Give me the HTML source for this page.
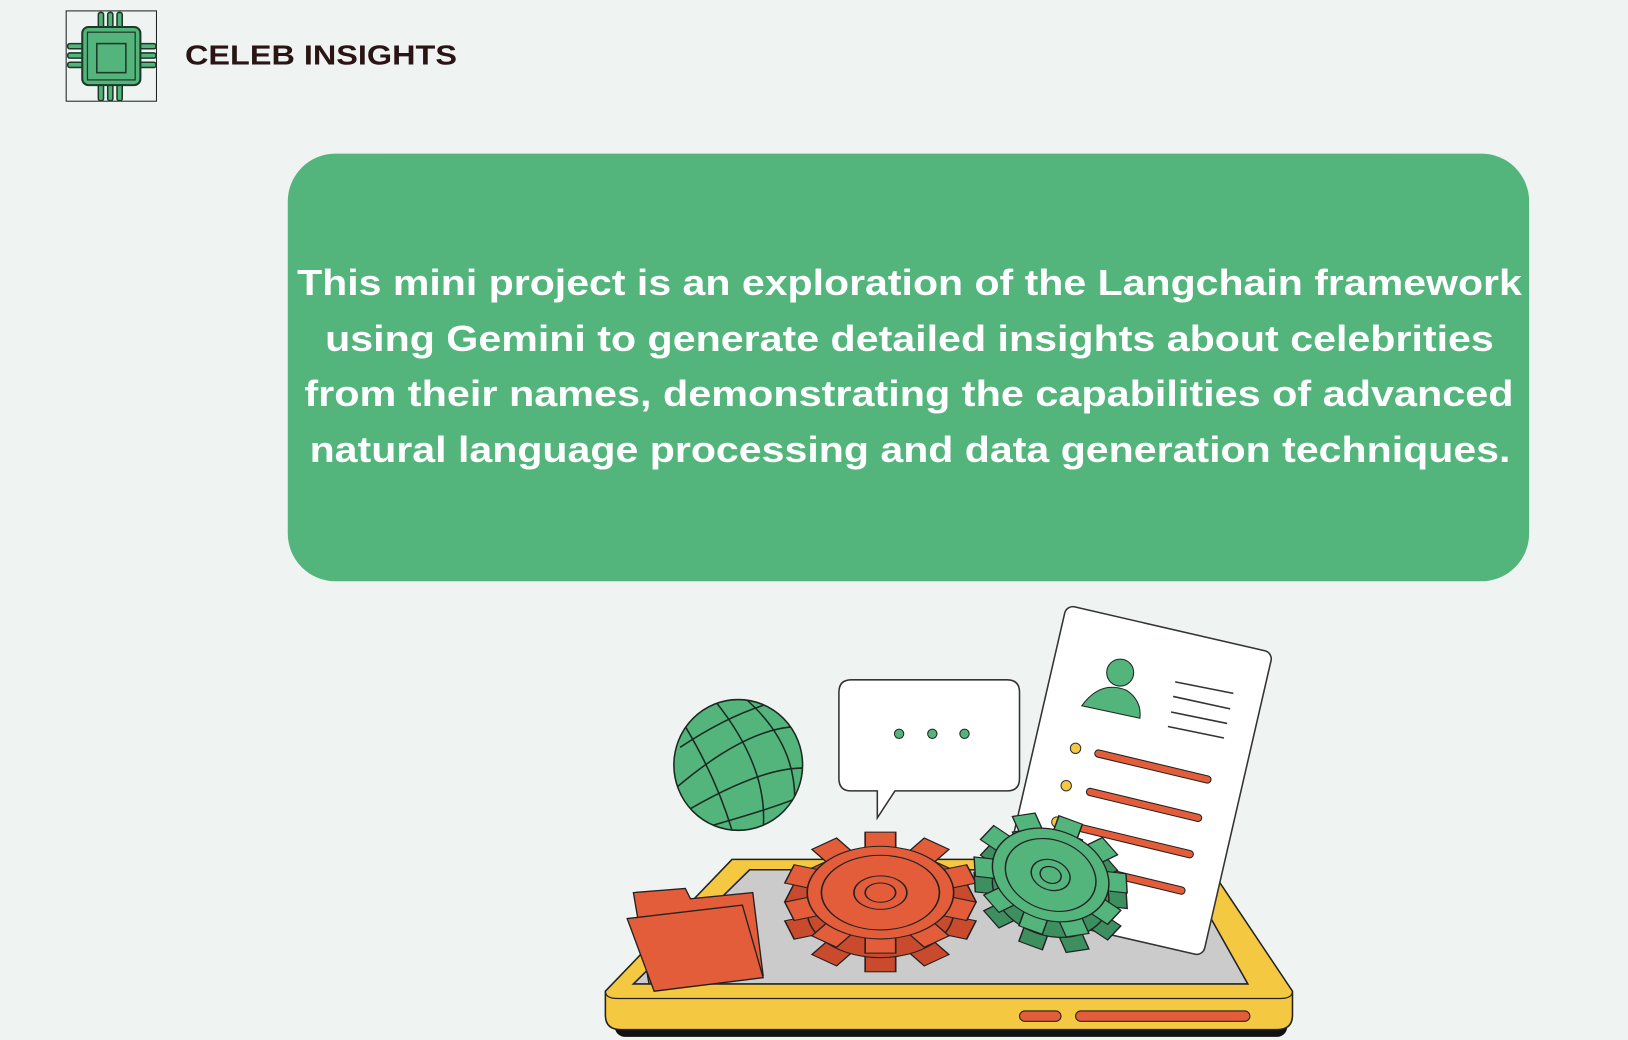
<!DOCTYPE html>
<html><head><meta charset="utf-8"><style>
html,body{margin:0;padding:0;background:#eff3f2;width:1628px;height:1040px;overflow:hidden}
svg{display:block}
text{font-family:"Liberation Sans",sans-serif;font-weight:bold}
</style></head><body>
<svg width="1628" height="1040" viewBox="0 0 1568 1002" xmlns="http://www.w3.org/2000/svg">
<defs>
<clipPath id="gc"><ellipse cx="711" cy="737" rx="62" ry="63"/></clipPath>
<g id="og">
<rect x="-15" y="-94" width="30" height="30"/><rect x="-15" y="-94" width="30" height="30" transform="rotate(36)"/><rect x="-15" y="-94" width="30" height="30" transform="rotate(72)"/><rect x="-15" y="-94" width="30" height="30" transform="rotate(108)"/><rect x="-15" y="-94" width="30" height="30" transform="rotate(144)"/><rect x="-15" y="-94" width="30" height="30" transform="rotate(180)"/><rect x="-15" y="-94" width="30" height="30" transform="rotate(216)"/><rect x="-15" y="-94" width="30" height="30" transform="rotate(252)"/><rect x="-15" y="-94" width="30" height="30" transform="rotate(288)"/><rect x="-15" y="-94" width="30" height="30" transform="rotate(324)"/>
<circle r="72"/>
</g>
</defs>
<rect width="1568" height="1002" fill="#eff3f2"/>
<!-- logo -->
<rect x="63.5" y="10.5" width="87" height="87" fill="#eff3f2" stroke="#222" stroke-width="1"/>
<g fill="#53b47c" stroke="#1d3a28" stroke-width="1.5">
<rect x="94.5" y="12" width="5" height="16" rx="2"/><rect x="103.5" y="12" width="5" height="16" rx="2"/><rect x="112.5" y="12" width="5" height="16" rx="2"/>
<rect x="94.5" y="80" width="5" height="17" rx="2"/><rect x="103.5" y="80" width="5" height="17" rx="2"/><rect x="112.5" y="80" width="5" height="17" rx="2"/>
<rect x="65" y="42" width="17" height="5" rx="2"/><rect x="65" y="51" width="17" height="5" rx="2"/><rect x="65" y="60" width="17" height="5" rx="2"/>
<rect x="132" y="42" width="18" height="5" rx="2"/><rect x="132" y="51" width="18" height="5" rx="2"/><rect x="132" y="60" width="18" height="5" rx="2"/>
<rect x="79" y="26" width="56" height="56" rx="6" stroke-width="2"/>
<rect x="84" y="31" width="46" height="46" fill="none" stroke-width="1.2"/>
<rect x="93" y="42" width="28" height="28" stroke-width="1.5"/>
</g>
<text x="178" y="62" font-size="27" fill="#2a1414" textLength="262" lengthAdjust="spacingAndGlyphs">CELEB INSIGHTS</text>
<!-- green card -->
<rect x="277" y="148" width="1196" height="412" rx="46" fill="#53b47c"/>
<g fill="#fff" font-size="35">
<text x="286" y="284" textLength="1180" lengthAdjust="spacingAndGlyphs">This mini project is an exploration of the Langchain framework</text>
<text x="313" y="338" textLength="1126" lengthAdjust="spacingAndGlyphs">using Gemini to generate detailed insights about celebrities</text>
<text x="293" y="391" textLength="1165" lengthAdjust="spacingAndGlyphs">from their names, demonstrating the capabilities of advanced</text>
<text x="298" y="445" textLength="1157" lengthAdjust="spacingAndGlyphs">natural language processing and data generation techniques.</text>
</g>
<!-- tablet -->
<rect x="592" y="975" width="648" height="24" rx="10" fill="#111"/>
<path d="M583,955 L705,828 L1160,828 L1245,955 L1245,978 Q1245,992 1230,992 L598,992 Q583,992 583,978 Z" fill="#f5c842" stroke="#222" stroke-width="1.5"/>
<path d="M583,955 Q583,962 595,962 L1233,962 Q1245,962 1245,955" fill="none" stroke="#222" stroke-width="1.2"/>
<path d="M610,948 L722,838 L1140,838 L1202,948 Z" fill="#cbcbcb" stroke="#222" stroke-width="1.5"/>
<rect x="982" y="974" width="40" height="10" rx="5" fill="#e45d3a" stroke="#222"/>
<rect x="1036" y="974" width="168" height="10" rx="5" fill="#e45d3a" stroke="#222"/>
<!-- globe -->
<ellipse cx="711" cy="737" rx="62" ry="63" fill="#53b47c" stroke="#1a2a20" stroke-width="1.5"/>
<g stroke="#1a2a20" stroke-width="1.5" fill="none" clip-path="url(#gc)">
<path d="M690,677 Q740,740 735,798"/><path d="M660,700 Q690,750 705,800"/><path d="M720,675 Q770,720 765,780"/>
<path d="M650,760 Q720,700 770,700"/><path d="M655,785 Q730,740 773,740"/><path d="M680,797 Q740,780 765,770"/><path d="M655,720 Q700,690 740,678"/>
</g>
<!-- bubble -->
<path d="M820,655 L970,655 Q982,655 982,667 L982,750 Q982,762 970,762 L862,762 L845,788 L845,762 L820,762 Q808,762 808,750 L808,667 Q808,655 820,655 Z" fill="#fff" stroke="#333" stroke-width="1.5"/>
<g fill="#53b47c" stroke="#222" stroke-width="1"><circle cx="866" cy="707" r="4.5"/><circle cx="898" cy="707" r="4.5"/><circle cx="929" cy="707" r="4.5"/></g>
<!-- document -->
<g transform="translate(1093,752) rotate(13)">
<rect x="-102" y="-150" width="204" height="300" rx="8" fill="#fff" stroke="#333" stroke-width="1.5"/>
</g>
<circle cx="1079" cy="648" r="13" fill="#53b47c" stroke="#222" stroke-width="1"/>
<path d="M1042,680 Q1060,655 1085,665 Q1100,675 1098,692 Z" fill="#53b47c" stroke="#222" stroke-width="1"/>
<g stroke="#333" stroke-width="1.5"><line x1="1132" y1="657" x2="1188" y2="668"/><line x1="1130" y1="671" x2="1185" y2="683"/><line x1="1128" y1="686" x2="1182" y2="697"/><line x1="1125" y1="700" x2="1179" y2="711"/></g>
<g fill="#f5c842" stroke="#333" stroke-width="1"><circle cx="1036" cy="721" r="5"/><circle cx="1027" cy="757" r="5"/><circle cx="1018" cy="792" r="5"/></g>
<g stroke="#222" stroke-width="8" stroke-linecap="round"><line x1="1058" y1="726" x2="1163" y2="751"/><line x1="1050" y1="763" x2="1154" y2="788"/><line x1="1042" y1="798" x2="1146" y2="823"/><line x1="1034" y1="833" x2="1138" y2="858"/></g>
<g stroke="#e45d3a" stroke-width="6" stroke-linecap="round"><line x1="1058" y1="726" x2="1163" y2="751"/><line x1="1050" y1="763" x2="1154" y2="788"/><line x1="1042" y1="798" x2="1146" y2="823"/><line x1="1034" y1="833" x2="1138" y2="858"/></g>
<!-- folder -->
<path d="M610,860 L660,856 L665,866 L725,860 L735,940 L625,948 Z" fill="#e45d3a" stroke="#222" stroke-width="1.3"/>
<path d="M604,885 L715,872 L735,942 L630,955 Z" fill="#e45d3a" stroke="#222" stroke-width="1.3"/>
<!-- orange gear -->
<g transform="translate(848,878) scale(0.98,0.62)" fill="#c94a2c" stroke="#222" stroke-width="1.6"><use href="#og"/></g>
<g transform="translate(848,860) scale(0.98,0.62)" fill="#e45d3a" stroke="#222" stroke-width="1.6">
<use href="#og"/>
<circle r="58" fill="none"/>
<circle r="26" fill="none"/>
<circle r="15" fill="none"/>
</g>
<!-- green gear -->
<g transform="translate(1012,858) rotate(20) scale(0.8,0.6)" fill="#3d8f5f" stroke="#222" stroke-width="1.8"><use href="#og"/></g>
<g transform="translate(1012,843) rotate(20) scale(0.8,0.6)" fill="#53b47c" stroke="#222" stroke-width="1.8">
<use href="#og"/>
<circle r="56" fill="none"/>
<circle r="24" fill="none"/>
<circle r="13" fill="none"/>
</g>
</svg>
</body></html>
